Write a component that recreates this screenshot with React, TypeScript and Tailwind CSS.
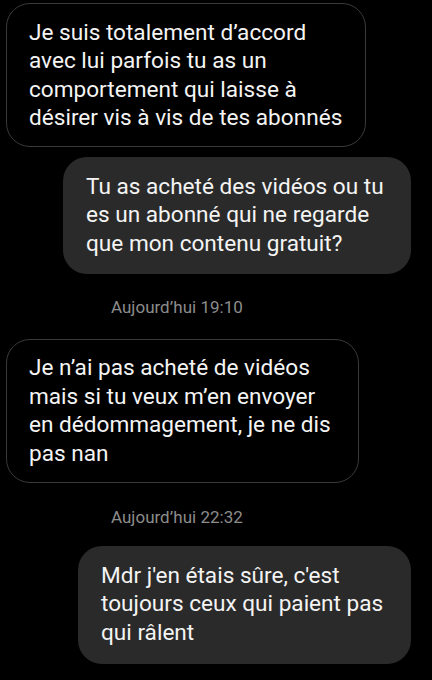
const font = { fontFamily: "Roboto, 'Noto Sans', sans-serif" };

function Received({ lines, className }: { lines: string[]; className: string }) {
  return (
    <div
      className={`rounded-[24px] border border-[#3a3a3a] bg-black pl-[22px] pr-4 text-[22.6px] leading-[28.5px] text-[#f4f4f4] ${className}`}
    >
      {lines.map((l, i) => (
        <div key={i} className="whitespace-nowrap">{l}</div>
      ))}
    </div>
  );
}

function Sent({ lines, className }: { lines: string[]; className: string }) {
  return (
    <div
      className={`rounded-[24px] bg-[#2a2a2a] pl-[23px] pr-4 text-[22.6px] leading-[28.5px] text-[#f4f4f4] ${className}`}
    >
      {lines.map((l, i) => (
        <div key={i} className="whitespace-nowrap">{l}</div>
      ))}
    </div>
  );
}

function Stamp({ children, className }: { children: React.ReactNode; className: string }) {
  return (
    <div className={`ml-[111px] text-[17px] leading-5 text-[#8c8c8c] ${className}`}>{children}</div>
  );
}

export default function App() {
  return (
    <div className="flex h-[680px] w-[432px] flex-col overflow-hidden bg-black pt-[2.5px]" style={font}>
      <Received
        className="ml-[6px] w-[360px] pt-[15px] pb-[13.5px]"
        lines={[
          "Je suis totalement d’accord",
          "avec lui parfois tu as un",
          "comportement qui laisse à",
          "désirer vis à vis de tes abonnés",
        ]}
      />
      <Sent
        className="ml-[63px] mt-[10px] w-[348px] pt-[15.5px] pb-[16px]"
        lines={[
          "Tu as acheté des vidéos ou tu",
          "es un abonné qui ne regarde",
          "que mon contenu gratuit?",
        ]}
      />
      <Stamp className="mt-[23px]">Aujourd’hui 19:10</Stamp>
      <Received
        className="ml-[6px] mt-[22px] w-[353px] pt-[14px] pb-[14px]"
        lines={[
          "Je n’ai pas acheté de vidéos",
          "mais si tu veux m’en envoyer",
          "en dédommagement, je ne dis",
          "pas nan",
        ]}
      />
      <Stamp className="mt-[24px]">Aujourd’hui 22:32</Stamp>
      <Sent
        className="ml-[78px] mt-[19px] w-[333px] pt-[15.5px] pb-[17px]"
        lines={[
          "Mdr j'en étais sûre, c'est",
          "toujours ceux qui paient pas",
          "qui râlent",
        ]}
      />
    </div>
  );
}
